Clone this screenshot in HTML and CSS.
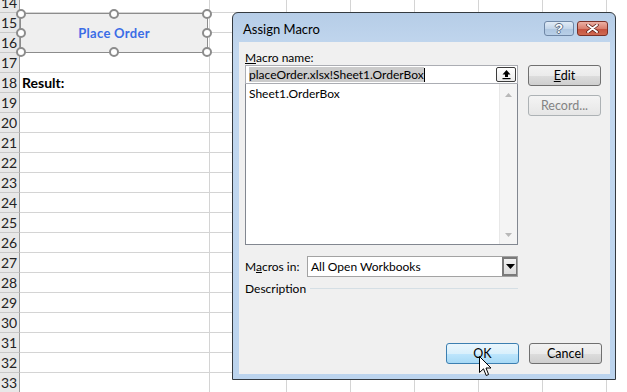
FILE: index.html
```html
<!DOCTYPE html>
<html lang="en">
<head>
  <meta charset="UTF-8" />
  <title>Assign Macro</title>
  <link rel="stylesheet" href="styles.css">
</head>
<body>

  <!-- Hoja de cálculo -->
  <div class="sheet">
    <div class="row"><div class="rh">14</div><div class="c a"></div><div class="c"></div><div class="c"></div><div class="c"></div><div class="c"></div><div class="c"></div><div class="c"></div></div>
    <div class="row"><div class="rh">15</div><div class="c a"></div><div class="c"></div><div class="c"></div><div class="c"></div><div class="c"></div><div class="c"></div><div class="c"></div></div>
    <div class="row"><div class="rh">16</div><div class="c a"></div><div class="c"></div><div class="c"></div><div class="c"></div><div class="c"></div><div class="c"></div><div class="c"></div></div>
    <div class="row"><div class="rh">17</div><div class="c a"></div><div class="c"></div><div class="c"></div><div class="c"></div><div class="c"></div><div class="c"></div><div class="c"></div></div>
    <div class="row"><div class="rh">18</div><div class="c a bold">Result:</div><div class="c"></div><div class="c"></div><div class="c"></div><div class="c"></div><div class="c"></div><div class="c"></div></div>
    <div class="row"><div class="rh">19</div><div class="c a"></div><div class="c"></div><div class="c"></div><div class="c"></div><div class="c"></div><div class="c"></div><div class="c"></div></div>
    <div class="row"><div class="rh">20</div><div class="c a"></div><div class="c"></div><div class="c"></div><div class="c"></div><div class="c"></div><div class="c"></div><div class="c"></div></div>
    <div class="row"><div class="rh">21</div><div class="c a"></div><div class="c"></div><div class="c"></div><div class="c"></div><div class="c"></div><div class="c"></div><div class="c"></div></div>
    <div class="row"><div class="rh">22</div><div class="c a"></div><div class="c"></div><div class="c"></div><div class="c"></div><div class="c"></div><div class="c"></div><div class="c"></div></div>
    <div class="row"><div class="rh">23</div><div class="c a"></div><div class="c"></div><div class="c"></div><div class="c"></div><div class="c"></div><div class="c"></div><div class="c"></div></div>
    <div class="row"><div class="rh">24</div><div class="c a"></div><div class="c"></div><div class="c"></div><div class="c"></div><div class="c"></div><div class="c"></div><div class="c"></div></div>
    <div class="row"><div class="rh">25</div><div class="c a"></div><div class="c"></div><div class="c"></div><div class="c"></div><div class="c"></div><div class="c"></div><div class="c"></div></div>
    <div class="row"><div class="rh">26</div><div class="c a"></div><div class="c"></div><div class="c"></div><div class="c"></div><div class="c"></div><div class="c"></div><div class="c"></div></div>
    <div class="row"><div class="rh">27</div><div class="c a"></div><div class="c"></div><div class="c"></div><div class="c"></div><div class="c"></div><div class="c"></div><div class="c"></div></div>
    <div class="row"><div class="rh">28</div><div class="c a"></div><div class="c"></div><div class="c"></div><div class="c"></div><div class="c"></div><div class="c"></div><div class="c"></div></div>
    <div class="row"><div class="rh">29</div><div class="c a"></div><div class="c"></div><div class="c"></div><div class="c"></div><div class="c"></div><div class="c"></div><div class="c"></div></div>
    <div class="row"><div class="rh">30</div><div class="c a"></div><div class="c"></div><div class="c"></div><div class="c"></div><div class="c"></div><div class="c"></div><div class="c"></div></div>
    <div class="row"><div class="rh">31</div><div class="c a"></div><div class="c"></div><div class="c"></div><div class="c"></div><div class="c"></div><div class="c"></div><div class="c"></div></div>
    <div class="row"><div class="rh">32</div><div class="c a"></div><div class="c"></div><div class="c"></div><div class="c"></div><div class="c"></div><div class="c"></div><div class="c"></div></div>
    <div class="row"><div class="rh">33</div><div class="c a"></div><div class="c"></div><div class="c"></div><div class="c"></div><div class="c"></div><div class="c"></div><div class="c"></div></div>
  </div>

  <!-- Forma "Place Order" seleccionada -->
  <div class="shape">
    <span>Place Order</span>
    <i class="handle h-tl"></i><i class="handle h-tc"></i><i class="handle h-tr"></i>
    <i class="handle h-ml"></i><i class="handle h-mr"></i>
    <i class="handle h-bl"></i><i class="handle h-bc"></i><i class="handle h-br"></i>
  </div>

  <!-- Diálogo -->
  <div class="dialog">
    <div class="titlebar">
      <span class="title">Assign Macro</span>
      <div class="caption-btns">
        <button class="cap help">?</button>
        <button class="cap close">
          <svg width="13" height="9" viewBox="0 0 13 9"><path d="M2 1 L11 8 M11 1 L2 8" stroke="#5a1a12" stroke-width="3.4" stroke-linecap="round"/><path d="M2 1 L11 8 M11 1 L2 8" stroke="#fff" stroke-width="2" stroke-linecap="round"/></svg>
        </button>
      </div>
    </div>

    <div class="body">
      <div class="main">
        <div class="left">
          <label class="lbl"><u>M</u>acro name:</label>
          <div class="namebox">
            <span class="sel">placeOrder.xlsx!Sheet1.OrderBox</span><span class="caret"></span>
            <span class="collapse">
              <svg width="11" height="11" viewBox="0 0 11 11"><path d="M5.5 1 L9.5 5.5 L7 5.5 L7 8 L4 8 L4 5.5 L1.5 5.5 Z" fill="#000"/><rect x="1.5" y="9" width="8" height="1.2" fill="#000"/></svg>
            </span>
          </div>
          <div class="listbox">
            <div class="items">Sheet1.OrderBox</div>
            <div class="vscroll">
              <svg width="7" height="4" viewBox="0 0 7 4"><path d="M0 4 L3.5 0 L7 4 Z" fill="#b8b8b8"/></svg>
              <svg width="7" height="4" viewBox="0 0 7 4"><path d="M0 0 L3.5 4 L7 0 Z" fill="#b8b8b8"/></svg>
            </div>
          </div>

          <div class="inrow">
            <label class="lbl">M<u>a</u>cros in:</label>
            <div class="combo">
              <span>All Open Workbooks</span>
              <span class="drop">
                <svg width="9" height="5" viewBox="0 0 9 5"><path d="M0 0 L9 0 L4.5 5 Z" fill="#000"/></svg>
              </span>
            </div>
          </div>

          <div class="desc">
            <span>Description</span>
            <span class="rule"></span>
          </div>
        </div>

        <div class="right">
          <button class="btn"><u>E</u>dit</button>
          <button class="btn disabled">Record...</button>
        </div>
      </div>

      <div class="footer">
        <button class="btn ok">OK</button>
        <button class="btn">Cancel</button>
      </div>
    </div>
  </div>

  <!-- Puntero -->
  <svg class="cursor" width="13" height="21" viewBox="0 0 13 21">
    <path d="M0.5 0.5 L0.5 16.5 L4.5 12.8 L7.2 19.5 L9.6 18.5 L7 12 L12 12 Z" fill="#fff" stroke="#000" stroke-width="1" stroke-linejoin="miter"/>
  </svg>

</body>
</html>
```

FILE: styles.css
```css
body {
  margin: 0;
  background-color: #fff;
  font-family: Lato, "Liberation Sans", sans-serif;
  overflow: hidden;
  width: 627px;
  height: 392px;
  position: relative;
}

/* Hoja */
.sheet {
  margin-top: -7px;
}
.row {
  display: flex;
  height: 20px;
}
.rh {
  flex: none;
  background-color: #e8e8e8;
  border-right: 1px solid #9e9e9e;
  border-bottom: 1px solid #c8c8c8;
  box-sizing: border-box;
  width: 20px;
  font-size: 14px;
  line-height: 19px;
  padding-left: 1px;
  color: #222;
}
.c {
  width: 64px;
  flex: none;
  box-sizing: border-box;
  border-right: 1px solid #d4d4d4;
  border-bottom: 1px solid #d4d4d4;
  font-size: 14px;
  line-height: 19px;
}
.c.a {
  width: 190px;
}
.c.a + .c {
  width: 77px;
}
.bold {
  font-weight: bold;
  padding-left: 2px;
  color: #000;
}

/* Forma seleccionada */
.shape {
  position: absolute;
  left: 20px;
  top: 13px;
  width: 188px;
  height: 40px;
  box-sizing: border-box;
  background-color: #efefef;
  border: 1px solid #8c8c8c;
  display: flex;
  align-items: center;
  justify-content: center;
}
.shape span {
  color: #3b6de6;
  font-weight: bold;
  font-size: 13px;
  letter-spacing: 0.3px;
}
.handle {
  position: absolute;
  width: 10px;
  height: 10px;
  box-sizing: border-box;
  border: 2px solid #8c8c8c;
  border-radius: 50%;
  background-color: #fff;
  margin: -5px 0 0 -5px;
}
.h-tl { left: 0; top: 0; }
.h-tc { left: 50%; top: 0; }
.h-tr { left: 100%; top: 0; }
.h-ml { left: 0; top: 50%; }
.h-mr { left: 100%; top: 50%; }
.h-bl { left: 0; top: 100%; }
.h-bc { left: 50%; top: 100%; }
.h-br { left: 100%; top: 100%; }

/* Diálogo */
.dialog {
  position: absolute;
  left: 232px;
  top: 12px;
  width: 384px;
  height: 368px;
  box-sizing: border-box;
  border: 1px solid #343a40;
  border-radius: 6px 6px 0 0;
  background: linear-gradient(#b6cde7, #c3d8ef 40px, #bcd4ee);
  padding: 0 5px 5px 6px;
  display: flex;
  flex-direction: column;
  font-family: Lato, "Liberation Sans", sans-serif;
  font-size: 12px;
  color: #000;
}
.titlebar {
  height: 29px;
  display: flex;
  align-items: center;
  justify-content: space-between;
  flex: none;
}
.title {
  padding-left: 4px;
  font-size: 13px;
  padding-top: 2px;
}
.caption-btns {
  display: flex;
  gap: 3px;
  margin-right: 2px;
  margin-top: 2px;
}
.cap {
  height: 15px;
  box-sizing: border-box;
  border-radius: 3px;
  padding: 0;
  display: flex;
  align-items: center;
  justify-content: center;
}
.help {
  width: 30px;
  border: 1px solid #6f87a6;
  background: linear-gradient(#e1ebf6, #c4d6ea 50%, #aec6e0 51%, #b8cfe8);
  color: #fff;
  font-weight: bold;
  font-size: 13px;
  font-family: "Liberation Sans", sans-serif;
  text-shadow: -1px 0 #5d6e84, 1px 0 #5d6e84, 0 -1px #5d6e84, 0 1px #5d6e84;
  line-height: 13px;
}
.close {
  width: 31px;
  border: 1px solid #7a3128;
  background: linear-gradient(#ecb0a4, #d9806f 50%, #c5503d 51%, #cf6a52);
}
.body {
  flex: 1;
  background-color: #f0f0f0;
  padding: 9px 8px 10px 6px;
  display: flex;
  flex-direction: column;
  justify-content: space-between;
}
.main {
  display: flex;
  gap: 10px;
}
.left {
  width: 273px;
  display: flex;
  flex-direction: column;
}
.lbl {
  height: 14px;
  line-height: 14px;
}
.namebox {
  height: 19px;
  box-sizing: border-box;
  border: 1px solid #abadb3;
  background-color: #fff;
  display: flex;
  align-items: center;
  padding-left: 3px;
  position: relative;
}
.sel {
  background-color: #cbcbcb;
  line-height: 15px;
}
.caret {
  width: 1px;
  height: 14px;
  background-color: #000;
}
.collapse {
  position: absolute;
  right: 1px;
  top: 1px;
  width: 20px;
  height: 15px;
  box-sizing: border-box;
  border: 1px solid #3c3c3c;
  border-radius: 2px;
  background: linear-gradient(#fff, #ececec);
  display: flex;
  align-items: center;
  justify-content: center;
}
.listbox {
  height: 161px;
  box-sizing: border-box;
  border: 1px solid #828790;
  border-top: none;
  background-color: #fff;
  display: flex;
}
.items {
  flex: 1;
  padding: 2px 3px;
  line-height: 15px;
}
.vscroll {
  width: 17px;
  background-color: #f4f4f4;
  border-left: 1px solid #e8e8e8;
  display: flex;
  flex-direction: column;
  justify-content: space-between;
  align-items: center;
  padding: 9px 0 7px;
}
.inrow {
  display: flex;
  align-items: center;
  margin-top: 11px;
}
.inrow .lbl {
  width: 62px;
}
.combo {
  flex: 1;
  height: 21px;
  box-sizing: border-box;
  border: 1px solid #a3a3a3;
  background-color: #fff;
  display: flex;
  align-items: center;
  justify-content: space-between;
  padding-left: 3px;
}
.drop {
  width: 15px;
  height: 19px;
  box-sizing: border-box;
  border: 2px solid #7a7a7a;
  border-right-width: 1px;
  background: linear-gradient(#f2f2f2, #dcdcdc);
  display: flex;
  align-items: center;
  justify-content: center;
}
.desc {
  display: flex;
  align-items: center;
  gap: 4px;
  margin-top: 4px;
  height: 14px;
}
.rule {
  flex: 1;
  height: 1px;
  background-color: #d5dfe5;
}
.right {
  width: 73px;
  display: flex;
  flex-direction: column;
  gap: 9px;
  padding-top: 14px;
}
.btn {
  width: 73px;
  height: 21px;
  box-sizing: border-box;
  border: 1px solid #707070;
  border-radius: 3px;
  background: linear-gradient(#f2f2f2, #ebebeb 50%, #dddddd 51%, #cfcfcf);
  font-family: Lato, "Liberation Sans", sans-serif;
  font-size: 12.5px;
  color: #000;
  padding: 0;
}
.btn.disabled {
  border-color: #adb2b5;
  color: #838383;
  background: linear-gradient(#f4f4f4, #e6e6e6);
}
.footer {
  display: flex;
  justify-content: flex-end;
  gap: 10px;
}
.btn.ok {
  border-color: #3c7fb1;
  background: linear-gradient(#eaf6fd, #d9f0fc 50%, #bee6fd 51%, #a7d9f5);
}

/* Puntero */
.cursor {
  position: absolute;
  left: 479px;
  top: 356px;
}
```
